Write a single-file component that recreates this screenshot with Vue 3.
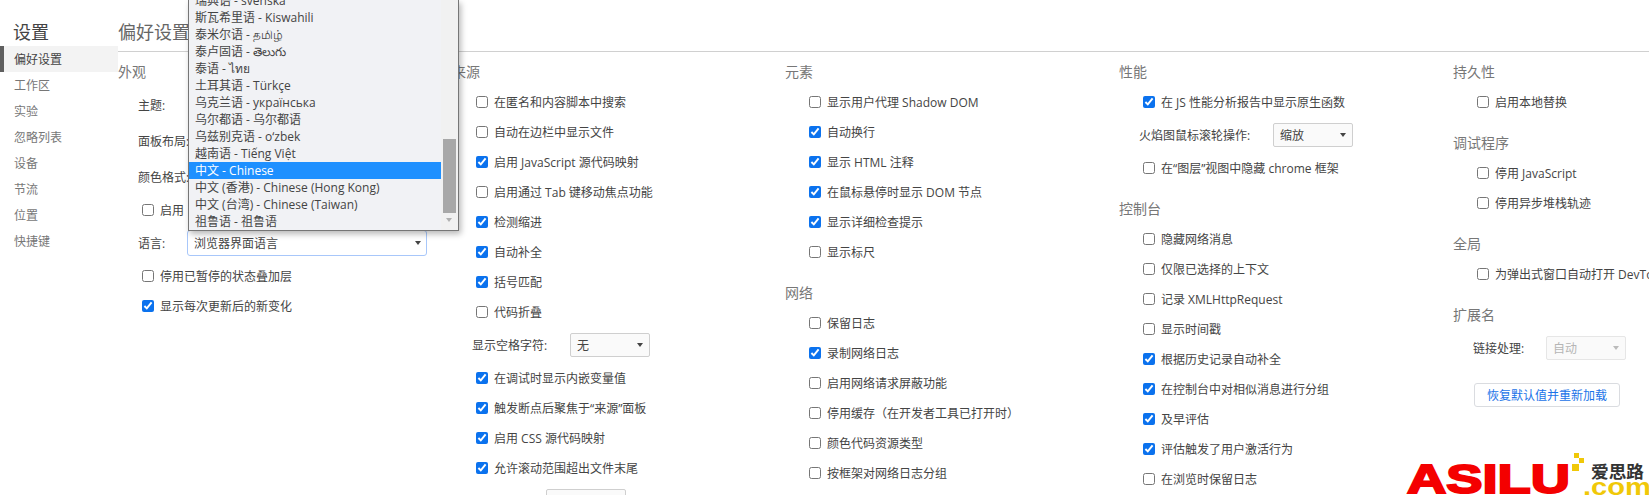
<script setup>
const nav = ['工作区', '实验', '忽略列表', '设备', '节流', '位置', '快捷键']
const langs = ['瑞典语 - svenska', '斯瓦希里语 - Kiswahili', '泰米尔语 - தமிழ்', '泰卢固语 - తెలుగు', '泰语 - ไทย', '土耳其语 - Türkçe', '乌克兰语 - українська', '乌尔都语 - 乌尔都语', '乌兹别克语 - o‘zbek', '越南语 - Tiếng Việt', '中文 - Chinese', '中文 (香港) - Chinese (Hong Kong)', '中文 (台湾) - Chinese (Taiwan)', '祖鲁语 - 祖鲁语']
const sources1 = [['在匿名和内容脚本中搜索', 0], ['自动在边栏中显示文件', 0], ['启用 JavaScript 源代码映射', 1], ['启用通过 Tab 键移动焦点功能', 0], ['检测缩进', 1], ['自动补全', 1], ['括号匹配', 1], ['代码折叠', 0]]
const sources2 = [['在调试时显示内嵌变量值', 1], ['触发断点后聚焦于“来源”面板', 1], ['启用 CSS 源代码映射', 1], ['允许滚动范围超出文件末尾', 1]]
const elements = [['显示用户代理 Shadow DOM', 0], ['自动换行', 1], ['显示 HTML 注释', 1], ['在鼠标悬停时显示 DOM 节点', 1], ['显示详细检查提示', 1], ['显示标尺', 0]]
const network = [['保留日志', 0], ['录制网络日志', 1], ['启用网络请求屏蔽功能', 0], ['停用缓存（在开发者工具已打开时）', 0], ['颜色代码资源类型', 0], ['按框架对网络日志分组', 0]]
const consoleRows = [['隐藏网络消息', 0], ['仅限已选择的上下文', 0], ['记录 XMLHttpRequest', 0], ['显示时间戳', 0], ['根据历史记录自动补全', 1], ['在控制台中对相似消息进行分组', 1], ['及早评估', 1], ['评估触发了用户激活行为', 1], ['在浏览时保留日志', 0]]
const debuggerRows = [['停用 JavaScript', 0], ['停用异步堆栈轨迹', 0]]
</script>

<template>
  <div class="page">
    <aside class="sidebar">
      <div class="side-title">设置</div>
      <div class="nav-item active">偏好设置</div>
      <div v-for="n in nav" :key="n" class="nav-item">{{ n }}</div>
    </aside>
    <main class="main">
      <div class="main-title">偏好设置</div>
      <div class="columns">
        <div class="col col1">
          <h3 class="head">外观</h3>
          <div class="sel-row">主题:</div>
          <div class="sel-row">面板布局:</div>
          <div class="sel-row">颜色格式:</div>
          <label class="check"><input type="checkbox" />启用</label>
          <div class="sel-row">
            <span class="lang-lbl">语言:</span>
            <div class="select lang"><span>浏览器界面语言</span><i class="arrow"></i></div>
          </div>
          <label class="check"><input type="checkbox" />停用已暂停的状态叠加层</label>
          <label class="check"><input type="checkbox" checked />显示每次更新后的新变化</label>
        </div>

        <div class="col col2">
          <h3 class="head">来源</h3>
          <label v-for="r in sources1" :key="r[0]" class="check"><input type="checkbox" :checked="!!r[1]" />{{ r[0] }}</label>
          <div class="sel-row">
            <span class="lbl w98">显示空格字符:</span>
            <div class="select"><span>无</span><i class="arrow"></i></div>
          </div>
          <label v-for="r in sources2" :key="r[0]" class="check"><input type="checkbox" :checked="!!r[1]" />{{ r[0] }}</label>
          <div class="sel-row">
            <span class="lbl w74"></span>
            <div class="select"></div>
          </div>
        </div>

        <div class="col col3">
          <h3 class="head">元素</h3>
          <label v-for="r in elements" :key="r[0]" class="check"><input type="checkbox" :checked="!!r[1]" />{{ r[0] }}</label>
          <h3 class="head next">网络</h3>
          <label v-for="r in network" :key="r[0]" class="check"><input type="checkbox" :checked="!!r[1]" />{{ r[0] }}</label>
        </div>

        <div class="col col4">
          <h3 class="head">性能</h3>
          <label class="check"><input type="checkbox" checked />在 JS 性能分析报告中显示原生函数</label>
          <div class="sel-row">
            <span class="lbl w134">火焰图鼠标滚轮操作:</span>
            <div class="select"><span>缩放</span><i class="arrow"></i></div>
          </div>
          <label class="check"><input type="checkbox" />在“图层”视图中隐藏 chrome 框架</label>
          <h3 class="head next">控制台</h3>
          <label v-for="r in consoleRows" :key="r[0]" class="check"><input type="checkbox" :checked="!!r[1]" />{{ r[0] }}</label>
        </div>

        <div class="col col5">
          <h3 class="head">持久性</h3>
          <label class="check"><input type="checkbox" />启用本地替换</label>
          <h3 class="head next">调试程序</h3>
          <label v-for="r in debuggerRows" :key="r[0]" class="check"><input type="checkbox" :checked="!!r[1]" />{{ r[0] }}</label>
          <h3 class="head next">全局</h3>
          <label class="check"><input type="checkbox" />为弹出式窗口自动打开 DevTools</label>
          <h3 class="head next">扩展名</h3>
          <div class="sel-row">
            <span class="lbl w73">链接处理:</span>
            <div class="select disabled"><span>自动</span><i class="arrow"></i></div>
          </div>
          <button class="reset">恢复默认值并重新加载</button>
        </div>
      </div>
    </main>

    <div class="dropdown">
      <div class="options">
        <div v-for="l in langs" :key="l" class="opt" :class="{ sel: l === '中文 - Chinese' }">{{ l }}</div>
      </div>
      <div class="scrollbar">
        <div class="thumb"></div>
        <i class="down"></i>
      </div>
    </div>

    <svg class="logo" width="243" height="42" viewBox="0 0 243 42" aria-label="ASILU 爱思路 .com">
      <text x="1" y="40" class="l-main" textLength="163" lengthAdjust="spacingAndGlyphs">ASILU</text>
      <rect x="168" y="0" width="5" height="5" class="sq" />
      <rect x="173" y="5" width="5" height="5" class="sq" />
      <rect x="166" y="11" width="7" height="7" class="sq" />
      <text x="185" y="25" class="l-cn" textLength="53" lengthAdjust="spacingAndGlyphs">爱思路</text>
      <text x="177" y="42" class="l-com" textLength="68" lengthAdjust="spacingAndGlyphs">.com</text>
    </svg>
  </div>
</template>

<style>
html, body { background: #fff; }
</style>

<style scoped>
.page {
  position: relative;
  display: flex;
  width: 1649px;
  height: 495px;
  overflow: hidden;
  background: #fff;
  font-family: "Open Sans", "Noto Sans", "Noto Sans CJK SC", sans-serif;
  font-size: 12px;
  color: #444;
}
.sidebar { width: 118px; flex: none; }
.side-title {
  height: 46px;
  padding: 21px 0 0 13px;
  box-sizing: border-box;
  font-size: 18px;
  line-height: 22px;
  color: #444;
}
.nav-item {
  height: 26px;
  line-height: 28px;
  padding-left: 14px;
  color: #777;
}
.nav-item.active {
  background: #f3f3f3;
  border-left: 4px solid #5f5f5f;
  padding-left: 10px;
  color: #444;
}
.main { flex: 1; min-width: 0; }
.main-title {
  padding-top: 21px;
  height: 30px;
  font-size: 18px;
  line-height: 22px;
  color: #666;
  border-bottom: 1px solid #d0d0d0;
}
.columns { display: flex; }
.col { flex: none; }
.col1 { width: 334px; }
.col2 { width: 333px; }
.col3 { width: 334px; }
.col4 { width: 334px; }
.col5 { width: 196px; }
.head {
  margin: 0;
  padding: 12px 0 7px;
  height: 16px;
  font-size: 14px;
  line-height: 16px;
  font-weight: 400;
  color: #777;
}
.head.next { padding-top: 18px; }
.check {
  display: flex;
  align-items: center;
  height: 30px;
  padding-left: 24px;
  white-space: nowrap;
}
.check input {
  width: 12px;
  height: 12px;
  margin: 0 6px 0 0;
  flex: none;
  accent-color: #0b72ee;
}
.sel-row {
  display: flex;
  align-items: center;
  height: 36px;
  padding-left: 20px;
  white-space: nowrap;
}
.lang-lbl { width: 49px; flex: none; }
.lbl { flex: none; }
.w98 { width: 98px; }
.w74 { width: 74px; }
.w134 { width: 134px; }
.w73 { width: 73px; }
.select {
  display: flex;
  align-items: center;
  justify-content: space-between;
  box-sizing: border-box;
  width: 80px;
  height: 24px;
  padding: 0 6px;
  background: #fafafa;
  border: 1px solid #cfcfcf;
  border-radius: 2px;
}
.select.lang {
  width: 240px;
  height: 26px;
  border: 1.5px solid #a8c7fa;
  background: #fff;
  border-radius: 3px;
  padding-right: 5px;
}
.arrow {
  width: 0;
  height: 0;
  border-left: 3.5px solid transparent;
  border-right: 3.5px solid transparent;
  border-top: 4px solid #444;
}
.select.disabled { color: #b5b5b5; background: #fafafa; border-color: #e6e6e6; }
.select.disabled .arrow { border-top-color: #bbb; }
.reset {
  display: block;
  width: 146px;
  height: 24px;
  margin: 17px 0 0 21px;
  padding: 0;
  background: #fff;
  border: 1px solid #dadce0;
  border-radius: 3px;
  font: inherit;
  color: #1a73e8;
}
.dropdown {
  position: absolute;
  left: 188px;
  top: 0;
  width: 271px;
  height: 231px;
  box-sizing: border-box;
  display: flex;
  background: #f1f2f5;
  border: 1px solid #767676;
  border-top: 0;
  box-shadow: 2px 3px 6px rgba(0, 0, 0, 0.28);
}
.options {
  width: 252px;
  display: flex;
  flex-direction: column;
  justify-content: flex-end;
  overflow: hidden;
}
.opt {
  flex: none;
  height: 17px;
  line-height: 17px;
  padding-left: 6px;
  white-space: nowrap;
  color: #444;
}
.opt.sel { background: #1e90ff; color: #fff; }
.scrollbar {
  position: relative;
  width: 17px;
  background: #f1f1f1;
}
.thumb {
  width: 13px;
  height: 74px;
  margin: 139px 0 0 2px;
  background: #a8a8a8;
}
.down {
  position: absolute;
  left: 5px;
  top: 218px;
  width: 0;
  height: 0;
  border-left: 3.5px solid transparent;
  border-right: 3.5px solid transparent;
  border-top: 4px solid #b0b0b0;
}
.logo { position: absolute; left: 1406px; top: 453px; overflow: visible; }
.sq { fill: #f0c808; }
.l-main {
  font-family: "Liberation Sans", sans-serif;
  font-weight: 700;
  font-size: 41px;
  fill: #f40000;
  stroke: #f40000;
  stroke-width: 2px;
}
.l-cn { font-family: "Noto Sans CJK SC", sans-serif; font-weight: 700; font-size: 17px; fill: #333; }
.l-com { font-family: "Liberation Sans", sans-serif; font-weight: 700; font-size: 24px; fill: #f0c808; }
</style>
